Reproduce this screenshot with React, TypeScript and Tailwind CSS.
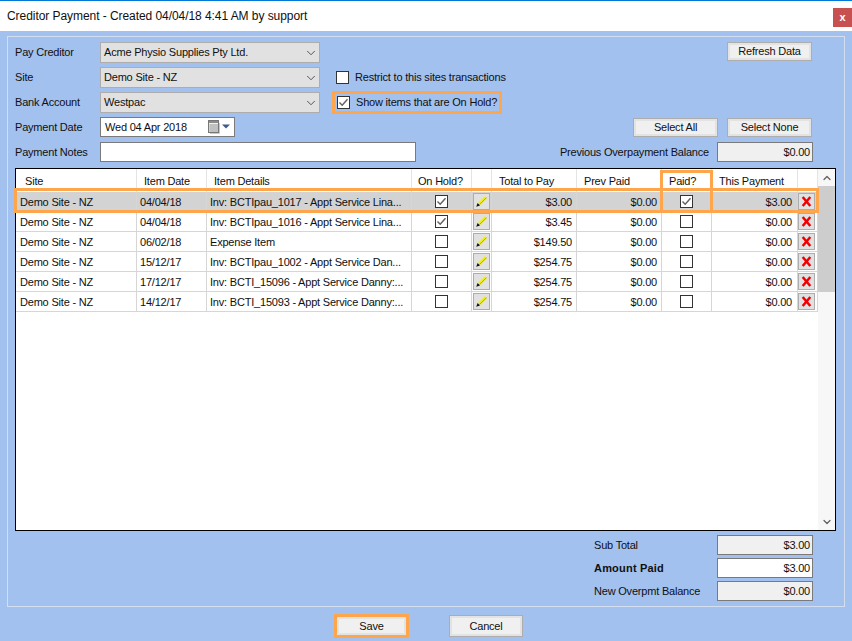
import { ChevronDown, ChevronUp } from "lucide-react";
import type { ReactNode } from "react";

const cols = "grid grid-cols-[121px_70px_205px_60px_20px_85px_85px_50px_86px_20px]";
const cell = "flex items-center border-r border-b border-[#d6d6d6] min-w-0 pt-[1px]";

const headers = [
  { label: "Site", cls: "pl-[9px]" },
  { label: "Item Date", cls: "pl-[7px]" },
  { label: "Item Details", cls: "pl-[7px]" },
  { label: "On Hold?", cls: "pl-[6px]" },
  { label: "", cls: "" },
  { label: "Total to Pay", cls: "pl-[7px]" },
  { label: "Prev Paid", cls: "pl-[7px]" },
  { label: "Paid?", cls: "pl-[7px]" },
  { label: "This Payment", cls: "pl-[7px]" },
  { label: "", cls: "" },
];

const rows = [
  { date: "04/04/18", details: "Inv: BCTIpau_1017 - Appt Service Lina...", hold: true, total: "$3.00", paid: true, pay: "$3.00", selected: true },
  { date: "04/04/18", details: "Inv: BCTIpau_1016 - Appt Service Lina...", hold: true, total: "$3.45", paid: false, pay: "$0.00", selected: false },
  { date: "06/02/18", details: "Expense Item", hold: false, total: "$149.50", paid: false, pay: "$0.00", selected: false },
  { date: "15/12/17", details: "Inv: BCTIpau_1002 - Appt Service Dan...", hold: false, total: "$254.75", paid: false, pay: "$0.00", selected: false },
  { date: "17/12/17", details: "Inv: BCTI_15096 - Appt Service Danny:...", hold: false, total: "$254.75", paid: false, pay: "$0.00", selected: false },
  { date: "14/12/17", details: "Inv: BCTI_15093 - Appt Service Danny:...", hold: false, total: "$254.75", paid: false, pay: "$0.00", selected: false },
];

function Label({ children, w = "w-[85px]" }: { children: ReactNode; w?: string }) {
  return <div className={`${w} shrink-0 whitespace-nowrap`}>{children}</div>;
}

function Combo({ value }: { value: string }) {
  return (
    <div className="w-[220px] h-[21px] shrink-0 flex items-center justify-between bg-[#e1e1e1] border border-[#adadad] pl-[3px] pr-[1px]">
      <span>{value}</span>
      <ChevronDown className="w-[14px] h-[14px] text-[#404040]" strokeWidth={1.5} />
    </div>
  );
}

function Btn({ children, w = "w-[85px]", h = "h-[19px]" }: { children: ReactNode; w?: string; h?: string }) {
  return (
    <div className={`${w} ${h} shrink-0 flex items-center justify-center bg-[#f0f0f0] border border-[#adadad] shadow-[inset_0_0_0_2px_#e3e3e3]`}>
      {children}
    </div>
  );
}

function Check({ on }: { on?: boolean }) {
  return (
    <div className="w-[13px] h-[13px] shrink-0 bg-white border border-[#333333] flex items-center justify-center">
      {on && (
        <svg width="11" height="11" viewBox="0 0 11 11" fill="none">
          <path d="M1.5 5.5 L4.2 8.2 L9.5 2.2" stroke="#606060" strokeWidth="1.4" />
        </svg>
      )}
    </div>
  );
}

function Field({ value, white }: { value: string; white?: boolean }) {
  return (
    <div className={`w-[96px] h-[20px] shrink-0 flex items-center justify-end pr-[2px] border border-[#7a7a7a] ${white ? "bg-white" : "bg-[#f0f0f0]"}`}>
      {value}
    </div>
  );
}

function PencilBtn() {
  return (
    <div className="w-[17px] h-[17px] -mt-[1px] bg-[#e1e1e1] border border-[#adadad] flex items-center justify-center">
      <svg width="13" height="13" viewBox="0 0 13 13" fill="none">
        <path d="M4 9 L11 2" stroke="#f5f000" strokeWidth="2.6" />
        <path d="M4.6 9.6 L11.6 2.6" stroke="#77771c" strokeWidth="0.6" />
        <path d="M1.2 11.8 L2.6 8 L5 10.4 Z" fill="#111111" />
      </svg>
    </div>
  );
}

function DeleteBtn() {
  return (
    <div className="w-[17px] h-[17px] -mt-[1px] bg-[#e1e1e1] border border-[#adadad] flex items-center justify-center">
      <svg width="11" height="11" viewBox="0 0 11 11" fill="none">
        <path d="M1.7 1 L9.3 10 M9.3 1 L1.7 10" stroke="#f00000" strokeWidth="2.5" />
      </svg>
    </div>
  );
}

function CalendarIcon() {
  return (
    <svg width="24" height="14" viewBox="0 0 24 14" fill="none">
      <path d="M3 13.5h9.5V3" stroke="#c8c8c8" />
      <rect x="1.5" y="0.5" width="10" height="12" fill="#f0f0f0" stroke="#777777" />
      <rect x="2" y="1" width="9" height="2" fill="#8c8c8c" />
      <path d="M4 4v8M6 4v8M8 4v8M10 4v8M2 5h9M2 7h9M2 9h9M2 11h9" stroke="#a4a4a4" strokeWidth="0.8" />
      <path d="M15 4.5h8l-4 4z" fill="#3e5a8a" />
    </svg>
  );
}

export default function App() {
  return (
    <div className="w-[852px] h-[641px] overflow-hidden flex flex-col bg-[#a3c1ee] text-[11px] leading-none tracking-[-0.2px] text-[#101010] font-['Liberation_Sans',sans-serif]">
      {/* title bar */}
      <div className="h-[31px] shrink-0 bg-white border-t border-[#0078d7] flex items-start justify-between pl-[7px]">
        <div className="mt-[9px] whitespace-nowrap text-[12px] tracking-[-0.06px]">Creditor Payment - Created 04/04/18 4:41 AM by support</div>
        <div className="w-[19px] h-[19px] mt-[7px] bg-[#c75050] text-white font-bold text-[11px] flex items-center justify-center">x</div>
      </div>

      {/* group box */}
      <div className="h-[571px] shrink-0 mt-[5px] mx-[7px] border border-[#d3dfee] pl-[7px] pr-[8px] pt-[5px] flex flex-col">
        <div className="flex items-center h-[21px]">
          <Label>Pay Creditor</Label>
          <Combo value="Acme Physio Supplies Pty Ltd." />
          <div className="ml-auto mr-[24px] self-start">
            <Btn>Refresh Data</Btn>
          </div>
        </div>

        <div className="flex items-center h-[21px] mt-[4px]">
          <Label>Site</Label>
          <Combo value="Demo Site - NZ" />
          <div className="ml-[16px]"><Check /></div>
          <span className="ml-[6px]">Restrict to this sites transactions</span>
        </div>

        <div className="flex items-center h-[21px] mt-[4px]">
          <Label>Bank Account</Label>
          <Combo value="Westpac" />
          <div className="ml-[12px] h-[23px] w-[170px] border-[3px] border-[#ffa64d] flex items-center pl-[2px]">
            <Check on />
            <span className="ml-[6px] whitespace-nowrap">Show items that are On Hold?</span>
          </div>
        </div>

        <div className="flex items-center h-[20px] mt-[4px]">
          <Label>Payment Date</Label>
          <div className="w-[135px] h-[20px] bg-white border border-[#7a7a7a] flex items-center justify-between pl-[4px] pr-[3px]">
            <span className="whitespace-nowrap">Wed 04 Apr 2018</span>
            <CalendarIcon />
          </div>
          <div className="ml-auto mr-[24px] flex gap-[9px]">
            <Btn>Select All</Btn>
            <Btn>Select None</Btn>
          </div>
        </div>

        <div className="flex items-center h-[20px] mt-[5px]">
          <Label>Payment Notes</Label>
          <div className="w-[316px] h-[20px] bg-white border border-[#7a7a7a]" />
          <div className="ml-auto mr-[8px]">Previous Overpayment Balance</div>
          <div className="mr-[23px]"><Field value="$0.00" /></div>
        </div>

        {/* grid */}
        <div className="relative h-[363px] mt-[6px] bg-white border border-black flex">
          <div className="w-[802px] shrink-0">
            <div className={`${cols} h-[23px]`}>
              {headers.map((h, i) => (
                <div key={i} className={`flex items-center pt-[1px] border-r border-[#e4e4e4] whitespace-nowrap ${h.cls}`}>{h.label}</div>
              ))}
            </div>
            {rows.map((r, i) => (
              <div key={i} className={`${cols} h-[20px] ${r.selected ? "bg-[#d3d3d3]" : ""}`}>
                <div className={`${cell} pl-[4px]`}>Demo Site - NZ</div>
                <div className={`${cell} pl-[3px]`}>{r.date}</div>
                <div className={`${cell} pl-[3px] whitespace-nowrap`}>{r.details}</div>
                <div className={`${cell} justify-center`}><div className="-mt-[1px]"><Check on={r.hold} /></div></div>
                <div className={`${cell} justify-center`}><PencilBtn /></div>
                <div className={`${cell} justify-end pr-[4px]`}>{r.total}</div>
                <div className={`${cell} justify-end pr-[4px]`}>$0.00</div>
                <div className={`${cell} justify-center`}><div className="-mt-[1px]"><Check on={r.paid} /></div></div>
                <div className={`${cell} justify-end pr-[5px]`}>{r.pay}</div>
                <div className={`${cell} justify-center pr-[2px]`}><DeleteBtn /></div>
              </div>
            ))}
          </div>

          {/* scrollbar */}
          <div className="ml-auto w-[17px] bg-[#f7f7f7] flex flex-col">
            <div className="h-[17px] flex items-center justify-center">
              <ChevronUp className="w-[12px] h-[12px] text-[#606060]" strokeWidth={2.5} />
            </div>
            <div className="h-[106px] bg-[#cdcdcd]" />
            <div className="mt-auto h-[17px] flex items-center justify-center">
              <ChevronDown className="w-[12px] h-[12px] text-[#606060]" strokeWidth={2.5} />
            </div>
          </div>

          {/* orange call-outs over the grid */}
          <div className="absolute left-[-2px] top-[19px] w-[805px] h-[25px] border-[3px] border-[#ffa64d] pointer-events-none" />
          <div className="absolute left-[644px] top-[1px] w-[53px] h-[43px] border-[3px] border-[#ffa64d] pointer-events-none" />
        </div>

        {/* totals */}
        <div className="mt-[4px] pr-[23px] flex flex-col items-end gap-[3px]">
          <div className="flex items-center">
            <div className="w-[123px]">Sub Total</div>
            <Field value="$3.00" />
          </div>
          <div className="flex items-center">
            <div className="w-[123px] font-bold tracking-[0.2px]">Amount Paid</div>
            <Field value="$3.00" white />
          </div>
          <div className="flex items-center">
            <div className="w-[123px]">New Overpmt Balance</div>
            <Field value="$0.00" />
          </div>
        </div>
      </div>

      {/* footer buttons */}
      <div className="flex items-start mt-[7px] pl-[334px]">
        <div className="w-[75px] h-[24px] border-[3px] border-[#ffa64d] bg-[#f0f0f0] shadow-[inset_0_0_0_2px_#e3e3e3] flex items-center justify-center">Save</div>
        <div className="ml-[40px] mt-[1px]">
          <Btn w="w-[74px]" h="h-[22px]">Cancel</Btn>
        </div>
      </div>
    </div>
  );
}
